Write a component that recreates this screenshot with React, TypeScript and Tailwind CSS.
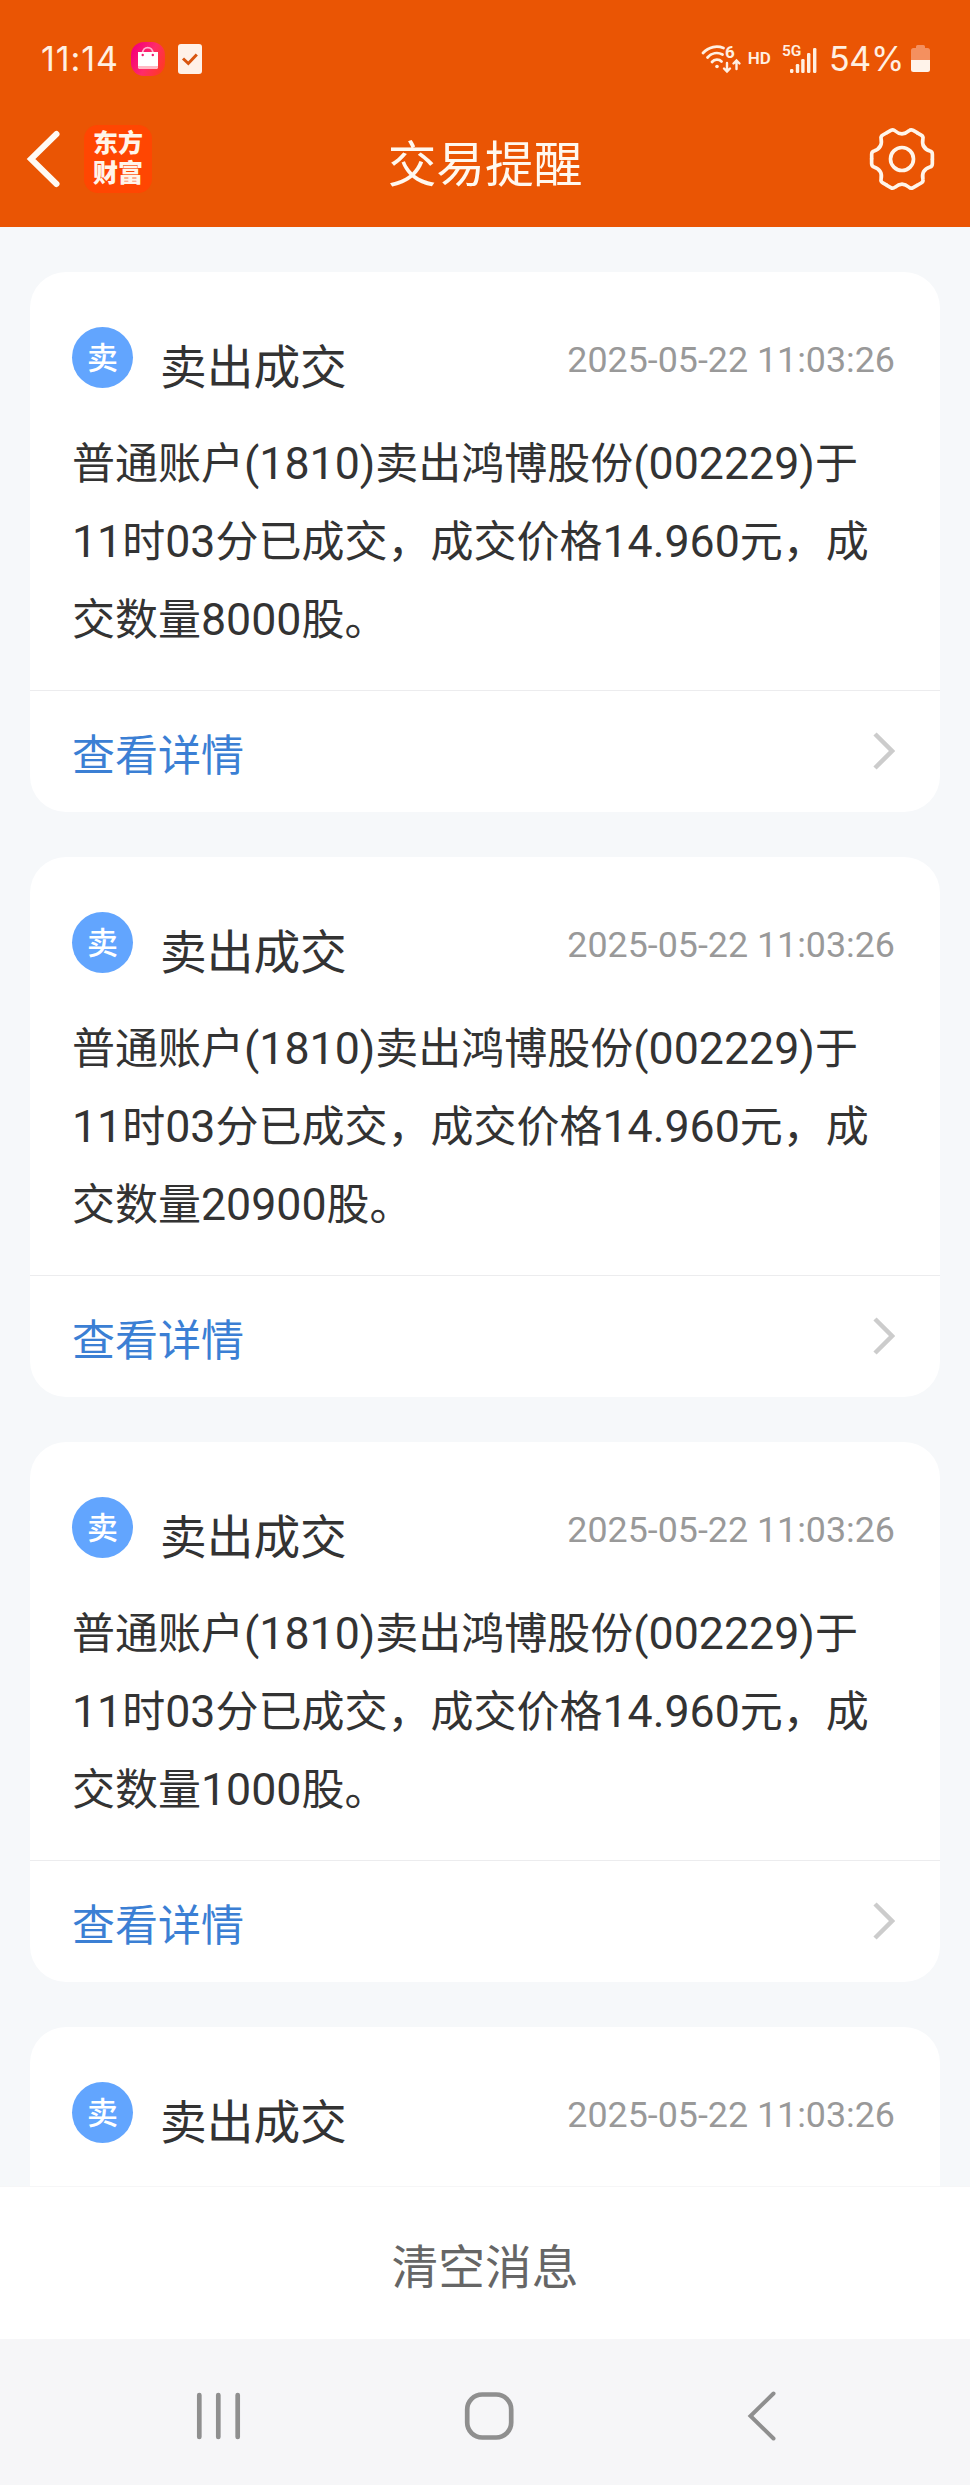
import React from 'react';

interface TradeMessage {
  id: number;
  title: string;
  time: string;
  content?: string;
}

const messages: TradeMessage[] = [
  {
    id: 1,
    title: '卖出成交',
    time: '2025-05-22 11:03:26',
    content: '普通账户(1810)卖出鸿博股份(002229)于11时03分已成交，成交价格14.960元，成交数量8000股。',
  },
  {
    id: 2,
    title: '卖出成交',
    time: '2025-05-22 11:03:26',
    content: '普通账户(1810)卖出鸿博股份(002229)于11时03分已成交，成交价格14.960元，成交数量20900股。',
  },
  {
    id: 3,
    title: '卖出成交',
    time: '2025-05-22 11:03:26',
    content: '普通账户(1810)卖出鸿博股份(002229)于11时03分已成交，成交价格14.960元，成交数量1000股。',
  },
  {
    id: 4,
    title: '卖出成交',
    time: '2025-05-22 11:03:26',
  },
];

// Digits and brackets are set in Roboto, slightly larger than the Chinese text
const MixedText: React.FC<{ text: string }> = ({ text }) => (
  <>
    {text.split(/([\d.()]+)/).map((part, idx) =>
      /^[\d.()]+$/.test(part) ? (
        <span key={idx} className="font-[Roboto,sans-serif] text-[44.7px] leading-none">
          {part}
        </span>
      ) : (
        part
      )
    )}
  </>
);

const StatusBar: React.FC = () => (
  <div className="flex h-[91px] items-center pt-[26px] pr-10 pl-10 text-[#fff0e2]">
    <span className="w-[76px] pl-px font-[Inter,sans-serif] text-[34px] leading-none tracking-[0.9px] whitespace-nowrap">
      11:14
    </span>

    {/* Shopping app notification */}
    <svg width="34" height="34" viewBox="0 0 34 34" className="ml-[15px]">
      <defs>
        <linearGradient id="bag" x1="0" y1="0.3" x2="1" y2="0.8">
          <stop offset="0" stopColor="#f5007a" />
          <stop offset="0.5" stopColor="#ff2b6a" />
          <stop offset="1" stopColor="#ff3a1e" />
        </linearGradient>
      </defs>
      <rect width="34" height="34" rx="13" fill="url(#bag)" />
      <path d="M11.5 12C11.5 3.5 22 3.5 22 12" fill="none" stroke="#ffb3cf" strokeWidth="1.8" />
      <path d="M7 10h20v14.5a2.5 2.5 0 0 1-2.5 2.5h-15A2.5 2.5 0 0 1 7 24.5z" fill="#fff" />
      <path d="M7 24h20v.5a2.5 2.5 0 0 1-2.5 2.5h-15A2.5 2.5 0 0 1 7 24.5z" fill="#ffb9c4" />
      <circle cx="11.7" cy="13" r="1.2" fill="#f5186f" />
      <circle cx="21.8" cy="13" r="1.2" fill="#f5186f" />
    </svg>

    {/* Task notification */}
    <svg width="24" height="30" viewBox="0 0 24 30" className="ml-[13px]">
      <rect width="24" height="30" rx="3" fill="#fff1e8" />
      <path d="M5 14.5l5.3 5L18.8 10.5" fill="none" stroke="#d9550f" strokeWidth="3" />
    </svg>

    <div className="ml-auto flex items-center">
      {/* Wi-Fi 6 with traffic arrows */}
      <svg width="40" height="30" viewBox="0 0 40 30" fill="none" stroke="currentColor" strokeWidth="2.8" strokeLinecap="round" className="overflow-visible">
        <path d="M2 9C8 2.5 16 1.3 22.5 4" />
        <path d="M6.5 13.5C10.5 9 16.5 8 21.5 10.5" />
        <path d="M11 18C13.5 15 18 15 20.5 17.5" />
        <circle cx="16" cy="22.5" r="1.8" fill="currentColor" stroke="none" />
        <path d="M26 19v8M23 24.5l3 3 3-3M35.5 25v-8M32.5 19.5l3-3 3 3" strokeWidth="2.4" />
        <text x="24" y="13.5" fill="currentColor" stroke="none" fontFamily="Roboto" fontWeight="700" fontSize="17">6</text>
      </svg>
      <span className="ml-[7px] font-[Roboto,sans-serif] text-[17px] leading-none font-semibold">HD</span>
      {/* Mobile signal */}
      <svg width="36" height="30" viewBox="0 0 36 30" fill="currentColor" className="ml-[11px] overflow-visible">
        <text x="0" y="12" fontFamily="Roboto" fontWeight="600" fontSize="15.5">5G</text>
        <rect x="8" y="25" width="3.4" height="4" rx="1.2" />
        <rect x="13.8" y="20" width="3.4" height="9" rx="1.2" />
        <rect x="19.2" y="15" width="3.4" height="14" rx="1.2" />
        <rect x="25" y="9" width="3.4" height="20" rx="1.2" />
        <rect x="31" y="4" width="3.4" height="25" rx="1.2" />
      </svg>
      <span className="ml-[11px] font-[Inter,sans-serif] text-[34px] leading-none tracking-[-0.3px]">54%</span>
      <svg width="19" height="27" viewBox="0 0 19 27" className="ml-[7px]">
        <path d="M5 3V1.5A1.5 1.5 0 0 1 6.5 0h6A1.5 1.5 0 0 1 14 1.5V3h2.5A2.5 2.5 0 0 1 19 5.5V15H0V5.5A2.5 2.5 0 0 1 2.5 3z" fill="#f4905f" />
        <path d="M0 15h19v9.500a2.5 2.5 0 0 1-2.5 2.5h-14A2.5 2.5 0 0 1 0 24.5z" fill="#fff3ea" />
      </svg>
    </div>
  </div>
);

const GearIcon: React.FC = () => (
  <svg width="68" height="68" viewBox="-102 -102 204 204" fill="none" stroke="#fff5ea" strokeWidth="11">
    {[0, 60, 120, 180, 240, 300].map((angle) => (
      <path
        key={angle}
        d="M91 -1L91 14Q91 22 84 24C66 30 59 42 62.8 61Q64.5 68 57.5 72L44.5 79.5"
        transform={`rotate(${angle})`}
      />
    ))}
    <circle r="34.5" />
  </svg>
);

const TitleBar: React.FC = () => (
  <div className="flex h-[136px] items-center justify-between pr-[34px] pl-[26px]">
    <div className="flex w-[240px] items-center">
      <svg width="36" height="60" viewBox="0 0 36 60" fill="none" stroke="#fffaf4" strokeWidth="6" strokeLinecap="round">
        <path d="M30.5 5L5 30L30.5 55" />
      </svg>
      <div className="ml-[22px] flex h-[68px] w-[68px] flex-col items-center rounded-[14px] bg-[#ff4602] pt-px text-[25px] leading-[30px] font-black text-[#fff5ea]">
        <span>东方</span>
        <span>财富</span>
      </div>
    </div>
    <h1 className="pb-px pl-2 text-[48.7px] leading-[60px] text-[#fff8ef]">
      <span className="block pt-[5px]">交易提醒</span>
    </h1>
    <div className="flex w-[240px] justify-end">
      <GearIcon />
    </div>
  </div>
);

const MessageCard: React.FC<{ message: TradeMessage }> = ({ message }) => (
  <div className="h-[540px] shrink-0 rounded-[36px] bg-white">
    <div className="h-[418px] pt-[55px] pr-[44px] pl-[42px]">
      <div className="flex h-[94px] items-start">
        <div className="flex h-[61px] w-[61px] items-center justify-center rounded-full bg-[#62a5fe] pb-1 text-[31px] leading-none font-medium text-white">
          卖
        </div>
        <h2 className="mt-[13px] ml-[27px] text-[46.7px] leading-[47px] text-[#333]">{message.title}</h2>
        <span className="mt-[15px] mr-px ml-auto font-[Roboto,sans-serif] text-[35.8px] leading-[36px] text-[#999]">
          {message.time}
        </span>
      </div>
      {message.content && (
        <p className="text-[43px] leading-[78.2px] text-[#333]">
          <MixedText text={message.content} />
        </p>
      )}
    </div>
    <div className="flex h-[122px] items-center border-t border-[#ececee] pr-[45px] pl-[42px]">
      <span className="pt-px text-[43px] leading-none text-[#3b7fd4]">查看详情</span>
      <svg width="22" height="38" viewBox="0 0 22 38" fill="none" stroke="#ccc" strokeWidth="4.5" className="mb-[2px] ml-auto">
        <path d="M2 2L19 19L2 36" />
      </svg>
    </div>
  </div>
);

const NavigationBar: React.FC = () => (
  <div className="flex h-[146px] shrink-0 items-center bg-[#f6f6f8] pt-[7px] pl-[196px] text-[#8f8f8f]">
    <svg width="45" height="48" viewBox="0 0 45 48" fill="none" stroke="currentColor" strokeWidth="4.7" strokeLinecap="round">
      <path d="M3.3 3v42M22.3 3v42M41.7 3v42" />
    </svg>
    <svg width="50" height="50" viewBox="0 0 50 50" fill="none" stroke="currentColor" strokeWidth="4.7" className="ml-[223px]">
      <rect x="3.2" y="3.5" width="44" height="43" rx="15" />
    </svg>
    <svg width="30" height="50" viewBox="0 0 30 50" fill="none" stroke="currentColor" strokeWidth="4" strokeLinecap="round" className="ml-[233px]">
      <path d="M26.5 2.5L3.5 25L26.5 47.5" />
    </svg>
  </div>
);

export default function App() {
  return (
    <div className="flex h-[2485px] w-[970px] flex-col overflow-hidden bg-[#f6f8fa] font-['Noto_Sans_CJK_SC',sans-serif]">
      <header className="h-[227px] shrink-0 bg-[#ea5504]">
        <StatusBar />
        <TitleBar />
      </header>

      <main className="flex min-h-0 flex-1 flex-col gap-[45px] overflow-hidden px-[30px] pt-[45px]">
        {messages.map((message) => (
          <MessageCard key={message.id} message={message} />
        ))}
      </main>

      <button className="h-[153px] shrink-0 border-t border-[#f6f6f7] bg-white pt-[3px] text-[46.7px] leading-none text-[#666]">
        清空消息
      </button>
      <NavigationBar />
    </div>
  );
}
